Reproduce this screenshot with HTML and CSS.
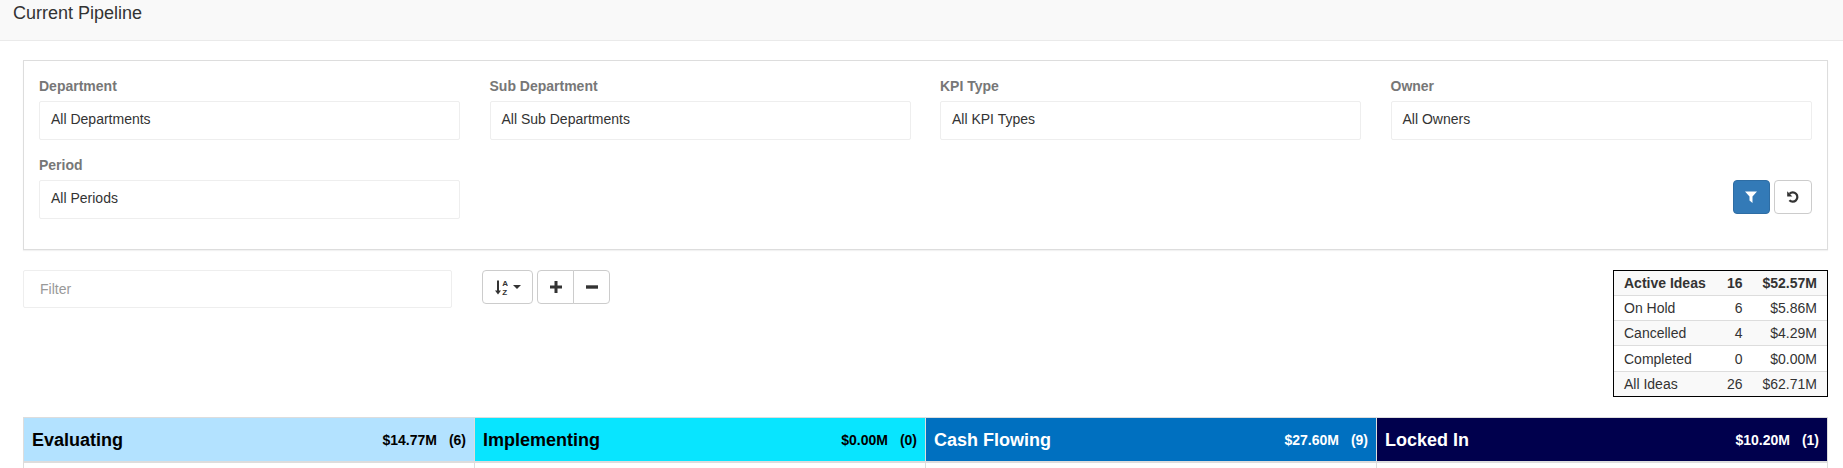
FILE: index.html
```html
<!DOCTYPE html>
<html lang="en">
<head>
    <meta charset="UTF-8">
    <title>Current Pipeline</title>
    <link rel="stylesheet" href="styles.css">
</head>
<body>
    <div class="page-header">Current Pipeline</div>

    <div class="content">
        <div class="filter-panel">
            <div class="field">
                <label>Department</label>
                <div class="select-box">All Departments</div>
            </div>
            <div class="field">
                <label>Sub Department</label>
                <div class="select-box">All Sub Departments</div>
            </div>
            <div class="field">
                <label>KPI Type</label>
                <div class="select-box">All KPI Types</div>
            </div>
            <div class="field">
                <label>Owner</label>
                <div class="select-box">All Owners</div>
            </div>
            <div class="field">
                <label>Period</label>
                <div class="select-box">All Periods</div>
            </div>
            <div class="panel-actions">
                <button class="btn btn-primary btn-filter">
                    <svg width="12" height="12" viewBox="0 0 12 12"><path d="M0 0.500h12L7.500 5.500V12L4.500 9.500v-4z" fill="#fff"/></svg>
                </button>
                <button class="btn btn-reset">
                    <svg width="14" height="14" viewBox="0 0 14 14"><path d="M3.500 3.800A4.600 4.600 0 1 1 3.400 10.200" fill="none" stroke="#333" stroke-width="2.200"/><path d="M1.200 1.200V6.400H6.400z" fill="#333"/></svg>
                </button>
            </div>
        </div>

        <div class="toolbar">
            <div class="filter-box">Filter</div>
            <button class="btn btn-sort">
                <svg width="13" height="15" viewBox="0 0 13 15">
                    <path d="M2 0.500h2v10h2L3 14.500 0 10.500h2z" fill="#333"/>
                    <text x="7.200" y="6" class="sort-letter">A</text>
                    <text x="7.200" y="14.500" class="sort-letter">Z</text>
                </svg>
                <span class="caret"></span>
            </button>
            <div class="btn-group">
                <button class="btn">
                    <svg width="14" height="14" viewBox="0 0 14 14"><path d="M5.500 1h3v4.500H13v3H8.500V13h-3V8.500H1v-3h4.500z" fill="#333"/></svg>
                </button>
                <button class="btn">
                    <svg width="14" height="14" viewBox="0 0 14 14"><path d="M1 5.300h12v3.400H1z" fill="#333"/></svg>
                </button>
            </div>
            <table class="summary">
                <tr class="summary-active"><td>Active Ideas</td><td>16</td><td>$52.57M</td></tr>
                <tr><td>On Hold</td><td>6</td><td>$5.86M</td></tr>
                <tr><td>Cancelled</td><td>4</td><td>$4.29M</td></tr>
                <tr><td>Completed</td><td>0</td><td>$0.00M</td></tr>
                <tr><td>All Ideas</td><td>26</td><td>$62.71M</td></tr>
            </table>
        </div>

        <div class="board">
            <div class="column">
                <div class="column-head evaluating">
                    <span class="column-title">Evaluating</span>
                    <span class="column-total">$14.77M</span>
                    <span class="column-count">(6)</span>
                </div>
            </div>
            <div class="column">
                <div class="column-head implementing">
                    <span class="column-title">Implementing</span>
                    <span class="column-total">$0.00M</span>
                    <span class="column-count">(0)</span>
                </div>
            </div>
            <div class="column">
                <div class="column-head cash-flowing">
                    <span class="column-title">Cash Flowing</span>
                    <span class="column-total">$27.60M</span>
                    <span class="column-count">(9)</span>
                </div>
            </div>
            <div class="column">
                <div class="column-head locked-in">
                    <span class="column-title">Locked In</span>
                    <span class="column-total">$10.20M</span>
                    <span class="column-count">(1)</span>
                </div>
            </div>
        </div>
    </div>
</body>
</html>
```
FILE: styles.css
```css
* {
    box-sizing: border-box;
}
html, body {
    height: 100%;
    overflow: hidden;
}
body {
    margin: 0;
    background-color: #fff;
    font-family: "Liberation Sans", Arial, sans-serif;
    font-size: 14px;
    color: #333;
}
.page-header {
    height: 41px;
    padding: 2px 13px 0;
    background-color: #f9f9f9;
    border-bottom: 1px solid #eaeaea;
    font-size: 18px;
    line-height: 22px;
}
.content {
    padding: 19px 15px 0 23px;
}
.filter-panel {
    display: grid;
    grid-template-columns: repeat(4, 421px);
    align-content: start;
    column-gap: 29.5px;
    row-gap: 15px;
    height: 190px;
    padding: 15px 16px 0 15px;
    border: 1px solid #ddd;
    box-shadow: 0 1px 1px rgba(0, 0, 0, 0.05);
}
.field label {
    display: block;
    height: 25px;
    font-weight: bold;
    font-size: 14px;
    line-height: 20px;
    color: #777;
}
.select-box {
    height: 39px;
    padding: 0 12px 0 11px;
    border: 1px solid #eee;
    border-radius: 2px;
    line-height: 35px;
    font-size: 14px;
}
.panel-actions {
    grid-column: 4;
    display: flex;
    justify-content: flex-end;
    align-items: flex-end;
    gap: 4px;
    padding-bottom: 5px;
}
.btn {
    display: flex;
    align-items: center;
    justify-content: center;
    height: 34px;
    padding: 0;
    background-color: #fff;
    border: 1px solid #ccc;
    border-radius: 4px;
    font: inherit;
}
.btn-primary {
    background-color: #337ab7;
    border-color: #2e6da4;
}
.btn-filter {
    width: 37px;
}
.btn-reset {
    width: 38px;
}
.toolbar {
    display: flex;
    align-items: flex-start;
    margin-top: 20px;
    height: 128px;
}
.filter-box {
    width: 429px;
    height: 38px;
    padding: 0 16px;
    border: 1px solid #eee;
    border-radius: 2px;
    line-height: 36px;
    color: #999;
}
.btn-sort {
    width: 51px;
    gap: 5px;
    margin-left: 30px;
}
.sort-letter {
    font-family: "Liberation Sans", Arial, sans-serif;
    font-size: 8px;
    font-weight: bold;
    fill: #333;
}
.caret {
    width: 0;
    height: 0;
    border-top: 4px solid #333;
    border-left: 4px solid transparent;
    border-right: 4px solid transparent;
}
.btn-group {
    display: flex;
    margin-left: 4px;
}
.btn-group .btn {
    width: 37px;
    border-radius: 4px 0 0 4px;
}
.btn-group .btn + .btn {
    width: 37px;
    margin-left: -1px;
    border-radius: 0 4px 4px 0;
}
.summary {
    width: 215px;
    height: 127px;
    margin-left: auto;
    border: 1px solid #000;
    border-collapse: separate;
    border-spacing: 0;
    font-size: 14px;
}
.summary td {
    padding: 0 10px;
    border-top: 1px solid #ddd;
    text-align: right;
}
.summary tr:first-child td {
    border-top: 0;
}
.summary td:first-child {
    text-align: left;
}
.summary td:nth-child(2) {
    padding: 0;
}
.summary td:last-child {
    width: 1%;
    padding-left: 20px;
}
.summary tr:nth-child(odd) {
    background-color: #f9f9f9;
}
.summary-active {
    font-weight: bold;
}
.board {
    display: flex;
    margin-top: 19px;
    height: 70px;
    border-top: 1px solid #ddd;
}
.column {
    flex: 1;
    border-right: 1px solid #ddd;
}
.column:first-child {
    border-left: 1px solid #ddd;
}
.column-head {
    display: flex;
    align-items: center;
    height: 45px;
    padding: 1px 8px 0;
    border-bottom: 2px solid #ddd;
    font-weight: bold;
    color: #000;
}
.column-title {
    flex: 1;
    font-size: 18px;
}
.column-total {
    font-size: 14px;
    margin-right: 12px;
}
.column-count {
    font-size: 14px;
}
.evaluating {
    background-color: #b3e2ff;
}
.implementing {
    background-color: #08e5ff;
}
.cash-flowing {
    background-color: #0070c0;
    color: #fff;
}
.locked-in {
    background-color: #00004d;
    color: #fff;
}
```
